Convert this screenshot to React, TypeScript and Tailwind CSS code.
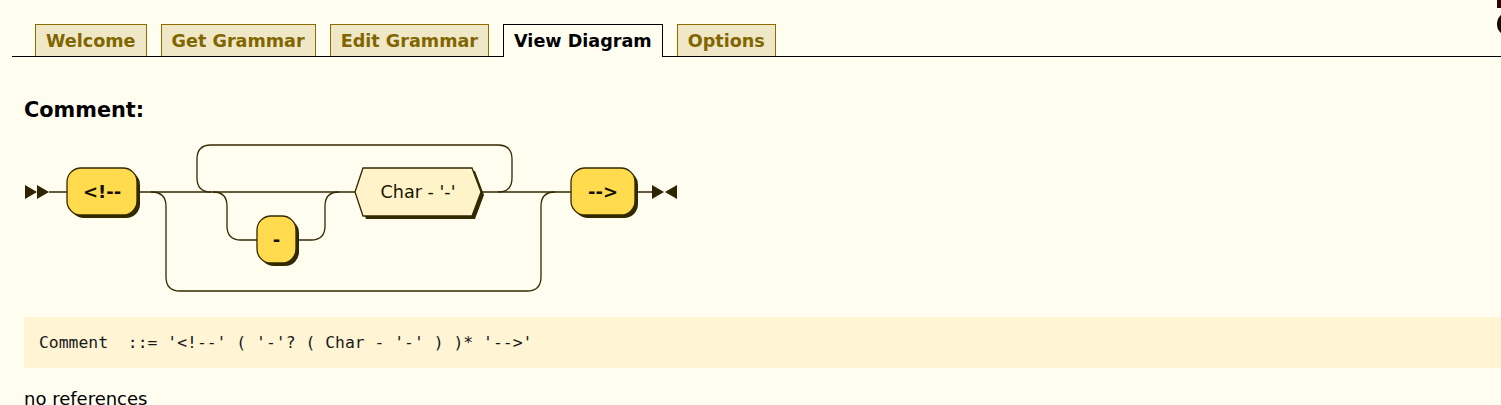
import React from 'react';

const tabs = ['Welcome', 'Get Grammar', 'Edit Grammar', 'View Diagram', 'Options'];
const active = 'View Diagram';

const STROKE = '#332900';

const Diagram: React.FC = () => (
  <svg width={660} height={160} viewBox="24 138 660 160" className="block">
    <g fill="none" stroke={STROKE} strokeWidth={1.3}>
      {/* main line */}
      <path d="M49 191 H67 M137 191 H355 M482 191 H571 M636 191 H652" />
      {/* bypass */}
      <path d="M151 191 Q166 191 166 205 V276 Q166 290 180 290 H527 Q541 290 541 276 V205 Q541 191 555 191" />
      {/* loop back */}
      <path d="M211 191 Q197 191 197 177 V158 Q197 144 211 144 H498 Q512 144 512 158 V177 Q512 191 498 191" />
      {/* optional '-' */}
      <path d="M213 191 Q227 191 227 205 V225 Q227 239 241 239 H257 M296 239 H311 Q325 239 325 225 V205 Q325 191 339 191" />
    </g>
    <g fill="#2e2500">
      <polygon points="25,184 37,191 25,198" />
      <polygon points="37,184 49,191 37,198" />
      <polygon points="652,184 664,191 652,198" />
      <polygon points="677,184 665,191 677,198" />
    </g>
    {/* <!-- */}
    <rect x={70} y={170} width={70} height={47} rx={14} fill={STROKE} />
    <rect x={67} y={167} width={70} height={47} rx={14} fill="#FFDB4D" stroke={STROKE} strokeWidth={1.3} />
    <text x={102} y={197} textAnchor="middle" fontFamily="DejaVu Sans, sans-serif" fontWeight="bold" fontSize={18} fill="#141000">&lt;!--</text>
    {/* - */}
    <rect x={260} y={218} width={39} height={47} rx={14} fill={STROKE} />
    <rect x={257} y={215} width={39} height={47} rx={14} fill="#FFDB4D" stroke={STROKE} strokeWidth={1.3} />
    <text x={276.5} y={245} textAnchor="middle" fontFamily="DejaVu Sans, sans-serif" fontWeight="bold" fontSize={18} fill="#141000">-</text>
    {/* Char - '-' */}
    <polygon points="358,194 366,170 475,170 484,194 475,218 366,218" fill={STROKE} />
    <polygon points="355,191 363,167 472,167 481,191 472,215 363,215" fill="#FFF4C9" stroke={STROKE} strokeWidth={1.3} />
    <text x={418} y={197} textAnchor="middle" fontFamily="DejaVu Sans, sans-serif" fontSize={17.6} fill="#1A1400">Char - '-'</text>
    {/* --> */}
    <rect x={574} y={170} width={64} height={47} rx={14} fill={STROKE} />
    <rect x={571} y={167} width={64} height={47} rx={14} fill="#FFDB4D" stroke={STROKE} strokeWidth={1.3} />
    <text x={603} y={197} textAnchor="middle" fontFamily="DejaVu Sans, sans-serif" fontWeight="bold" fontSize={18} fill="#141000">--&gt;</text>
  </svg>
);

export default function App() {
  return (
    <div className="relative min-h-[405px] w-full overflow-hidden bg-[#FFFCF0] text-black font-['DejaVu_Sans',sans-serif]">
      {/* clipped logo at the top right */}
      <div className="absolute right-0 top-0 h-[8px] w-[4px] bg-[#2a0600]" />
      <div className="absolute right-[-16px] top-[13px] h-[22px] w-[20px] rounded-full bg-[#1a0800]" />

      <div className="pt-[24px]">
        <div className="ml-[12px] flex gap-[14px] border-b border-black pl-[23px]">
          {tabs.map((t) =>
            t === active ? (
              <div
                key={t}
                className="-mb-px h-[33px] border border-b-0 border-black bg-[#FFFCF0] px-[10px] pt-[5px] text-[17.6px] font-bold leading-[22px] text-black"
              >
                {t}
              </div>
            ) : (
              <div
                key={t}
                className="h-[32px] border border-b-0 border-[#8B6C00] bg-[#F0E7C6] px-[10px] pt-[5px] text-[17.6px] font-bold leading-[22px] text-[#806600]"
              >
                {t}
              </div>
            )
          )}
        </div>
      </div>

      <div className="px-[24px]">
        <h2 className="mt-[40px] text-[20.8px] font-bold leading-[26px]">Comment:</h2>
        <div className="mt-[16px]">
          <Diagram />
        </div>
        <div className="-mr-[24px] mt-[18px] flex h-[51px] items-center bg-[#FFF4D4] pl-[15px]">
          <pre className="font-['DejaVu_Sans_Mono',monospace] text-[16.4px] leading-[20px] text-[#1a1a1a]">
            Comment  ::= '&lt;!--' ( '-'? ( Char - '-' ) )* '--&gt;'
          </pre>
        </div>
        <p className="mt-[20px] text-[18px] leading-[22px]">no references</p>
      </div>
    </div>
  );
}
